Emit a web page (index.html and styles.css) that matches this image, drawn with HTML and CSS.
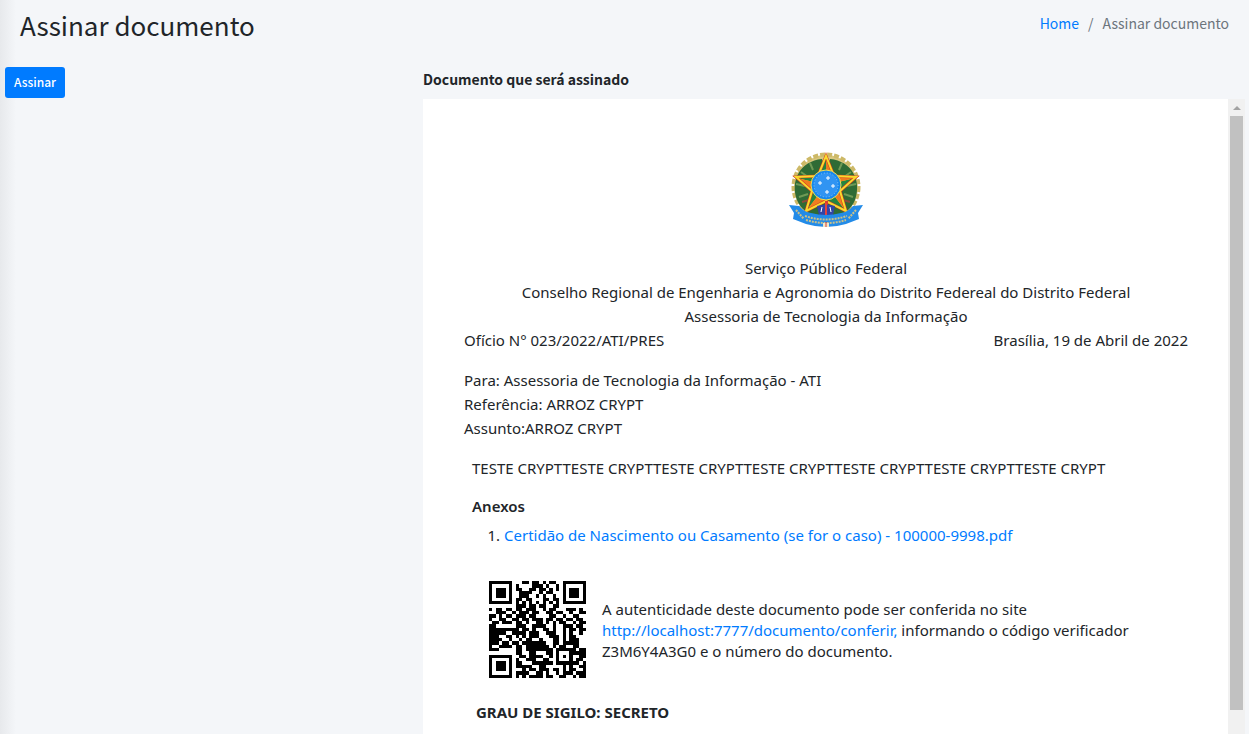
FILE: index.html
```html
<!DOCTYPE html>
<html lang="pt-BR">
<head>
<meta charset="utf-8">
<title>Assinar documento</title>
<link rel="stylesheet" href="styles.css">
</head>
<body>
<header class="page-header">
  <h1 class="page-title">Assinar documento</h1>
  <nav class="breadcrumb" aria-label="Navegação"><a href="#">Home</a><span class="separator">/</span><span>Assinar documento</span></nav>
</header>
<main class="content">
  <section class="actions"><button class="sign-button" type="button">Assinar</button></section>
  <section class="preview">
    <h2 class="preview-title">Documento que será assinado</h2>
    <div class="frame">
      <article class="document">
        <svg class="crest" viewBox="0 0 76 78" role="img" aria-label="Brasão da República">
          <circle cx="38" cy="36" r="32" fill="#d9c77e"/>
          <circle cx="38" cy="36" r="32.5" fill="none" stroke="#cdb967" stroke-width="4" stroke-dasharray="5 2"/>
          <path d="M34 8C12 10 2 30 9 49c4 10 12 15 24 16l5-8 5 8c12-1 20-6 24-16C74 30 64 10 42 8l-4 12z" fill="#2f6b35"/>
          <path d="M13 21l7 5M8 33l9 2M11 46l9-3M19 56l7-6M22 12l3 7M63 21l-7 5M68 33l-9 2M65 46l-9-3M57 56l-7-6M54 12l-3 7" stroke="#6f9a55" stroke-width="2"/>
          <path d="M12 28l6 2M14 51l7-2M64 28l-6 2M62 51l-7-2" stroke="#8e4b38" stroke-width="2"/>
          <path d="M38 5L46 25 68 26 52 40 58 60 38 50 18 60 24 40 8 26 30 25Z" fill="#fbd719"/>
          <path d="M38 6v28L30 26zM67 27L38 34l14 6zM57 59L38 34v15zM19 59l19-25-13 5zM9 27l29 7-8-8z" fill="#258540"/>
          <path d="M38 6v28l8-8zM67 27L38 34l8-8zM57 59L38 34l14 6zM19 59l19-25v15zM9 27l29 7-13 6z" fill="#ef7c20"/>
          <path d="M38 5L46 25 68 26 52 40 58 60 38 50 18 60 24 40 8 26 30 25Z" fill="none" stroke="#d23b22" stroke-width="3"/>
          <path d="M38 5L46 25 68 26 52 40 58 60 38 50 18 60 24 40 8 26 30 25Z" fill="none" stroke="#f9dc2c" stroke-width="2"/>
          <circle cx="38" cy="34" r="15" fill="#1688ee" stroke="#f7dc4c"/>
          <circle cx="38" cy="34" r="12" fill="#3094f2" stroke="#8cc5f6" stroke-width="1" stroke-dasharray="1 2"/>
          <path d="M40 25v4m-2-2h4M32 30v4m-2-2h4M45 33v4m-2-2h4M39 39v4m-2-2h4" stroke="#fff" stroke-width="1"/>
          <path d="M37 50h3v24h-3z" fill="#d83b34"/>
          <path d="M29 55q9-3 18 0l-2 9H31z" fill="#3345a5"/>
          <path d="M34 56l-1 5m9-5l1 5" stroke="#fff" stroke-width="1"/>
          <path d="M38 52v12" stroke="#e4433c" stroke-width="2"/>
          <path d="M1 54l10 1q5 6 12 7 15 4 30 0 7-1 12-7l10-1-5 8 1 6-13 5Q38 79 18 73L5 68l1-6z" fill="#238be8"/>
          <path d="M17 65q21 7 42 0M8 59l8 9M68 59l-8 9M18 69q20 6 40 0" fill="none" stroke="#c9c18a" stroke-width="2" stroke-dasharray="2 1"/>
          <path d="M35 72h6v4h-6z" fill="#eee7cb"/>
          <path d="M38 71v5" stroke="#d83b34" stroke-width="1"/>
        </svg>
        <div class="letterhead">
          <div>Serviço Público Federal</div>
          <div>Conselho Regional de Engenharia e Agronomia do Distrito Federeal do Distrito Federal</div>
          <div>Assessoria de Tecnologia da Informação</div>
        </div>
        <div class="reference"><span>Ofício N° 023/2022/ATI/PRES</span><span>Brasília, 19 de Abril de 2022</span></div>
        <div class="recipient">
          <div>Para: Assessoria de Tecnologia da Informação - ATI</div>
          <div>Referência: ARROZ CRYPT</div>
          <div>Assunto:ARROZ CRYPT</div>
        </div>
        <p class="body-text">TESTE CRYPTTESTE CRYPTTESTE CRYPTTESTE CRYPTTESTE CRYPTTESTE CRYPTTESTE CRYPT</p>
        <h3 class="attachments-title">Anexos</h3>
        <ol class="attachments"><li><a href="#">Certidão de Nascimento ou Casamento (se for o caso) - 100000-9998.pdf</a></li></ol>
        <div class="verification">
          <svg class="qr" viewBox="0 0 29 29" shape-rendering="crispEdges" role="img" aria-label="Código QR"><path id="qr-modules"/></svg>
          <p class="verification-text">A autenticidade deste documento pode ser conferida no site <a href="#">http://localhost:7777/documento/conferir,</a> informando o código verificador Z3M6Y4A3G0 e o número do documento.</p>
        </div>
        <p class="secrecy">GRAU DE SIGILO: SECRETO</p>
      </article>
      <div class="scrollbar" aria-hidden="true"><svg class="scroll-arrow" viewBox="0 0 8 4"><path d="M0 4L4 0l4 4z"/></svg><div class="thumb"></div></div>
    </div>
  </section>
</main>
<script src="qr.js"></script>
</body>
</html>
```
FILE: styles.css
```css
* { box-sizing: border-box; }
body {
  margin: 0;
  height: 100vh;
  overflow: hidden;
  color: #212529;
  background: linear-gradient(to right, #e7e9ec, #f4f6f9 16px);
  font: 14px/24px "Noto Sans CJK JP", sans-serif;
}
h1, h2, h3, p { margin: 0; }
a { color: #007bff; text-decoration: none; }
.page-header { display: flex; justify-content: space-between; padding: 7px 20px 0; }
.page-title { font-size: 26px; font-weight: 400; line-height: 36px; }
.breadcrumb { line-height: 32px; color: #6c757d; }
.separator { padding: 0 9px; }
.content { display: grid; grid-template-columns: 1fr 2fr; gap: 7px; padding: 24px 4px 0 5px; }
.sign-button {
  height: 31px;
  padding: 0 9px 2px;
  border: 0;
  border-radius: 3px;
  color: #fff;
  background: #007bff;
  font: 500 12px/29px "Noto Sans CJK JP", sans-serif;
}
.preview-title { font-size: 14px; font-weight: 700; line-height: 24px; padding-bottom: 8px; }
.frame { display: flex; background: #fff; }
.document { flex: 1; padding: 52px 40px 40px 41px; font-family: "Noto Sans", sans-serif; font-size: 15px; }
.crest { display: block; width: 76px; height: 78px; margin: 0 auto 27px; }
.letterhead { text-align: center; }
.reference { display: flex; justify-content: space-between; }
.recipient { padding: 16px 0; }
.body-text { padding: 0 8px; }
.attachments-title { padding: 14px 8px 0; font-size: 15px; font-weight: 600; }
.attachments { margin: 5px 0 0; padding-left: 40px; }
.verification { display: flex; align-items: center; gap: 16px; padding: 34px 40px 0 25px; }
.qr { flex: none; width: 97px; height: 97px; }
.verification-text { line-height: 21px; padding-top: 2px; }
.secrecy { padding: 22px 12px 0; font-weight: 700; }
.scrollbar { display: flex; flex-direction: column; width: 17px; padding: 7px 2px 24px; background: #f1f1f1; height: calc(100vh - 99px); }
.scroll-arrow { display: block; width: 8px; height: 4px; margin: 0 auto 6px; fill: #a3a3a3; }
.thumb { flex: 1; background: #c1c1c1; }
```
FILE: qr.js
```javascript
const rows = [
  "11111110001101101011001111111",
  "10000010100001110100101000001",
  "10111010110011011010101011101",
  "10111010011110010110001011101",
  "10111010011100101001001011101",
  "10000010110110001101101000001",
  "11111110101010101010101111111",
  "00000000111011011001100000000",
  "10110110110111001011000111010",
  "00111001011101100110110010011",
  "11010110111011000011001001100",
  "10011001101101110110110110110",
  "01101110110100110101011001011",
  "11000000111001111001001110110",
  "11111111101101001101001011011",
  "11111001111011100111001010010",
  "11100110101011100011101011000",
  "11110010010110010001101011100",
  "11101101101111111001101111100",
  "10011110110111111101011001100",
  "11100000110111111110111111011",
  "00000000110011000110100011111",
  "11111110011011110010101010011",
  "10000010100111001100100010110",
  "10111010110001111110111111101",
  "10111010111110011000001010011",
  "10111010001011011101101011001",
  "10000010111100110100101110111",
  "11111110101011110110011001011"
];

document.getElementById("qr-modules").setAttribute("d", rows.map((row, y) =>
  [...row].map((cell, x) => cell === "1" ? `M${x} ${y}h1v1h-1z` : "").join("")
).join(""));
```
